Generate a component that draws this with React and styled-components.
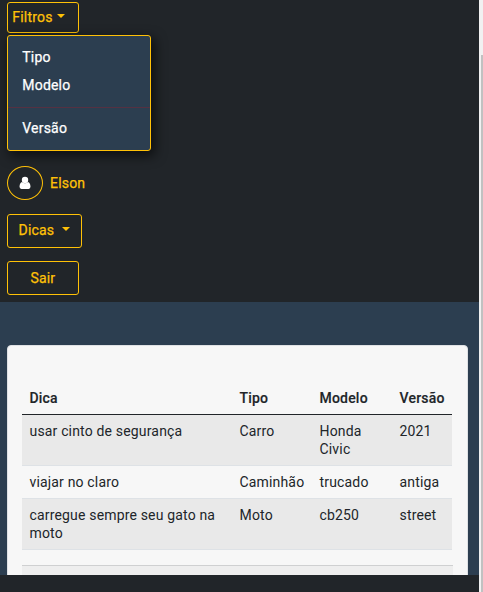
import React from "react";
import styled, { createGlobalStyle } from "styled-components";

const Global = createGlobalStyle`
  * { box-sizing: border-box; }
  body {
    margin: 0;
    overflow: hidden;
    font-family: Roboto, "Liberation Sans", sans-serif;
    font-size: 14px;
    line-height: 18px;
    color: #212529;
    background: #212529;
  }
`;

const Shell = styled.div`
  display: flex;
  width: 483px;
  height: 592px;
`;

const Page = styled.div`
  display: flex;
  flex-direction: column;
  width: 479px;
  height: 592px;
  background: #212529;
`;

const ScrollTrack = styled.div`
  width: 4px;
  height: 592px;
  padding: 55px 0 0 2px;
  background: #f1f1f1;
`;

const ScrollThumb = styled.div`
  height: 537px;
  background: #c1c1c1;
`;

const Header = styled.header`
  display: flex;
  flex-direction: column;
  align-items: flex-start;
  flex: none;
  height: 302px;
  padding: 2px 7px 0;
  -webkit-text-stroke-width: 0.25px;
`;

const OutlineButton = styled.button`
  display: flex;
  align-items: center;
  width: ${(p) => p.$width}px;
  height: ${(p) => p.$height}px;
  margin: 0 0 ${(p) => p.$gap || 0}px;
  padding: 0 0 ${(p) => p.$lift || 0}px ${(p) => p.$inset}px;
  border: 1px solid #ffc107;
  border-radius: 3px;
  background: transparent;
  color: #ffc107;
  font: 400 14px/18px Roboto, sans-serif;
  letter-spacing: 0.2px;
`;

const Caret = styled.span`
  margin: 0 0 ${(p) => p.$rise}px ${(p) => p.$gap}px;
  border: 4px solid transparent;
  border-top-color: #ffc107;
  border-bottom: 0;
`;

const Menu = styled.nav`
  width: 144px;
  height: 116px;
  padding-top: 8px;
  margin-bottom: 15px;
  border: 1px solid #ffc107;
  border-radius: 3px;
  background: #2c3e50;
  box-shadow: 3px 4px 12px 1px rgba(0, 0, 0, 0.6);
`;

const MenuItem = styled.div`
  height: 28px;
  padding: 4px 14.3px;
  color: #fff;
  letter-spacing: 0.2px;
`;

const MenuDivider = styled.hr`
  height: 1px;
  margin: 7px 0;
  border: 0;
  background: #553142;
`;

const User = styled.div`
  display: flex;
  align-items: center;
  gap: 7px;
  height: 34px;
  margin-bottom: 14px;
  color: #ffc107;
  letter-spacing: 0.2px;
`;

const Avatar = styled.span`
  display: flex;
  align-items: center;
  justify-content: center;
  width: 36px;
  height: 34px;
  border: 1px solid #ffc107;
  border-radius: 50%;
`;

const Content = styled.main`
  height: 273px;
  flex: none;
  padding: 43px 11px 0 7px;
  overflow: hidden;
  background: #2c3e50;
`;

const Card = styled.section`
  height: 260px;
  padding: 37px 15px 0 14px;
  border: 1px solid #dfe1e4;
  border-radius: 4px;
  background: #f7f7f7;
`;

const Table = styled.table`
  width: 430px;
  table-layout: fixed;
  border-collapse: separate;
  border-spacing: 0;
`;

const Column = styled.col`
  width: ${(p) => p.$width}px;
`;

const HeadCell = styled.th`
  height: 32px;
  padding: 6px 0 7px 7.5px;
  border-bottom: 1px solid #212529;
  text-align: left;
  font-weight: 500;
  letter-spacing: 0.2px;
  -webkit-text-stroke: 0.15px;
`;

const Cell = styled.td`
  padding: 7px 6px 7px 7.5px;
  border-bottom: 1px solid #dee2e6;
  vertical-align: top;
  letter-spacing: 0.17px;
  white-space: pre-line;
`;

const Row = styled.tr`
  background: ${(p) => (p.$striped ? "#e9e9e9" : "transparent")};
`;

const CardFooter = styled.div`
  width: 431px;
  height: 40px;
  margin-top: 15px;
  border-top: 1px solid #cfd0d1;
  background: #eeeeee;
`;

const rows = [
  ["usar cinto de segurança", "Carro", "Honda\nCivic", "2021"],
  ["viajar no claro", "Caminhão", "trucado", "antiga"],
  ["carregue sempre seu gato na moto", "Moto", "cb250", "street"],
];

const UserIcon = () => (
  <svg width="12" height="14" viewBox="0 0 12 14" fill="#fff" aria-hidden="true">
    <circle cx="6" cy="4" r="3.2" />
    <path d="M3 6Q.8 6.5.5 10.6Q.5 13 2.4 13H9.6Q11.5 13 11.5 10.6Q11.2 6.5 9 6Q6 8.4 3 6Z" />
  </svg>
);

export default function App() {
  return (
    <>
      <Global />
      <Shell>
        <Page>
          <Header>
            <OutlineButton $width={72} $height={31} $gap={2} $inset={4.3} $lift={1}>
              Filtros
              <Caret $gap={4} $rise={2} />
            </OutlineButton>
            <Menu>
              <MenuItem>Tipo</MenuItem>
              <MenuItem>Modelo</MenuItem>
              <MenuDivider />
              <MenuItem>Versão</MenuItem>
            </Menu>
            <User>
              <Avatar>
                <UserIcon />
              </Avatar>
              Elson
            </User>
            <OutlineButton $width={75} $height={34} $gap={13} $inset={10.5} $lift={2}>
              Dicas
              <Caret $gap={8} $rise={2} />
            </OutlineButton>
            <OutlineButton $width={72} $height={34} $inset={22.4}>
              Sair
            </OutlineButton>
          </Header>
          <Content>
            <Card>
              <Table>
                <colgroup>
                  <Column $width={210} />
                  <Column $width={80} />
                  <Column $width={80} />
                  <Column $width={60} />
                </colgroup>
                <thead>
                  <tr>
                    <HeadCell>Dica</HeadCell>
                    <HeadCell>Tipo</HeadCell>
                    <HeadCell>Modelo</HeadCell>
                    <HeadCell>Versão</HeadCell>
                  </tr>
                </thead>
                <tbody>
                  {rows.map((row, i) => (
                    <Row key={row[0]} $striped={i % 2 === 0}>
                      {row.map((value) => (
                        <Cell key={value}>{value}</Cell>
                      ))}
                    </Row>
                  ))}
                </tbody>
              </Table>
              <CardFooter />
            </Card>
          </Content>
        </Page>
        <ScrollTrack>
          <ScrollThumb />
        </ScrollTrack>
      </Shell>
    </>
  );
}
